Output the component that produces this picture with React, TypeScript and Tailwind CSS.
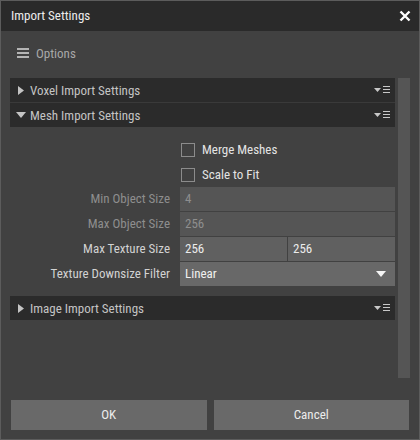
import React from "react";

const font = { fontFamily: '"Roboto Condensed", "Liberation Sans Narrow", "DejaVu Sans Condensed", Roboto, sans-serif' };

function RightIcon() {
  return (
    <svg width="17" height="8" viewBox="0 0 17 8" className="shrink-0">
      <polygon points="0,2 7,2 3.5,6" fill="#c8c8c8" />
      <rect x="9" y="0" width="7" height="1" fill="#c8c8c8" />
      <rect x="9" y="3" width="7" height="1" fill="#c8c8c8" />
      <rect x="9" y="6" width="7" height="1" fill="#c8c8c8" />
    </svg>
  );
}

function Header({ title, open }: { title: string; open?: boolean }) {
  return (
    <div className="h-[24px] bg-[#2b2b2b] flex items-center pr-[4px]">
      <div className="w-[20px] flex justify-center ml-[1px] mr-[-1px]">
        {open ? (
          <svg width="10" height="6" viewBox="0 0 10 6">
            <polygon points="0,0 10,0 5,6" fill="#c4c4c4" />
          </svg>
        ) : (
          <svg width="6" height="9" viewBox="0 0 6 9">
            <polygon points="0,0 6,4.5 0,9" fill="#c4c4c4" />
          </svg>
        )}
      </div>
      <span className="flex-1 text-[13px] text-[#c4c4c4] leading-none">{title}</span>
      <RightIcon />
    </div>
  );
}

function CheckRow({ label }: { label: string }) {
  return (
    <div className="h-[25px] flex items-center">
      <div className="w-[160px]" />
      <div className="ml-[11px] w-[14px] h-[14px] border border-[#8c8c8c]" />
      <span className="ml-[7px] text-[13px] text-[#e4e4e4]">{label}</span>
    </div>
  );
}

function FieldRow({ label, disabled, children }: { label: string; disabled?: boolean; children: React.ReactNode }) {
  return (
    <div className="h-[24px] flex items-stretch">
      <div className={"w-[160px] flex items-center justify-end text-[13px] " + (disabled ? "text-[#8e8e8e]" : "text-[#d2d2d2]")}>
        {label}
      </div>
      <div className="ml-[10px] flex-1 flex gap-[1px]">{children}</div>
    </div>
  );
}

export default function App() {
  return (
    <div className="w-[420px] h-[440px] border border-[#5c5c5c] bg-[#414141] flex flex-col" style={font}>
      <div className="h-[30px] bg-[#2a2a2a] flex items-center justify-between pl-[10px] pr-[8px] shrink-0">
        <span className="text-[13px] text-[#ececec]">Import Settings</span>
        <svg width="12" height="12" viewBox="0 0 12 12">
          <path d="M1.5 1.5 L10.5 10.5 M10.5 1.5 L1.5 10.5" stroke="#ffffff" strokeWidth="2.4" />
        </svg>
      </div>
      <div className="h-[46px] flex items-center pl-[16px] pb-[1px] shrink-0">
        <svg width="13" height="11" viewBox="0 0 13 11">
          <rect x="0" y="0" width="12" height="2" fill="#b4b4b4" />
          <rect x="0" y="4" width="12" height="2" fill="#b4b4b4" />
          <rect x="0" y="8" width="12" height="2" fill="#b4b4b4" />
        </svg>
        <span className="ml-[6px] text-[13px] text-[#a8a8a8]">Options</span>
      </div>
      <div className="flex pl-[9px] pr-[9px] pt-[1px] h-[301px] shrink-0">
        <div className="w-[385px] flex flex-col">
          <Header title="Voxel Import Settings" />
          <div className="h-[1px] bg-[#3a3a3a]" />
          <Header title="Mesh Import Settings" open />
          <div className="pt-[10px] pb-[10px] flex flex-col">
            <CheckRow label="Merge Meshes" />
            <CheckRow label="Scale to Fit" />
            <div className="flex flex-col gap-[1px]">
              <FieldRow label="Min Object Size" disabled>
                <div className="flex-1 bg-[#555555] flex items-center pl-[5px] text-[13px] text-[#8e8e8e]">4</div>
              </FieldRow>
              <FieldRow label="Max Object Size" disabled>
                <div className="flex-1 bg-[#555555] flex items-center pl-[5px] text-[13px] text-[#8e8e8e]">256</div>
              </FieldRow>
              <FieldRow label="Max Texture Size">
                <div className="flex-1 bg-[#606060] flex items-center pl-[5px] text-[13px] text-[#ececec]">256</div>
                <div className="flex-1 bg-[#606060] flex items-center pl-[5px] text-[13px] text-[#ececec]">256</div>
              </FieldRow>
              <FieldRow label="Texture Downsize Filter">
                <div className="flex-1 bg-[#686868] flex items-center pl-[5px] pr-[9px] text-[13px] text-[#f0f0f0]">
                  <span className="flex-1">Linear</span>
                  <svg width="10" height="6" viewBox="0 0 10 6">
                    <polygon points="0,0 10,0 5,6" fill="#f4f4f4" />
                  </svg>
                </div>
              </FieldRow>
            </div>
          </div>
          <Header title="Image Import Settings" />
        </div>
        <div className="ml-[3px] w-[12px] bg-[#555555]" />
      </div>
      <div className="flex-1" />
      <div className="flex gap-[7px] px-[10px] pb-[9px] shrink-0">
        <button className="flex-1 h-[30px] bg-[#696969] text-[13px] text-[#ececec]">OK</button>
        <button className="flex-1 h-[30px] bg-[#696969] text-[13px] text-[#ececec]">Cancel</button>
      </div>
    </div>
  );
}
